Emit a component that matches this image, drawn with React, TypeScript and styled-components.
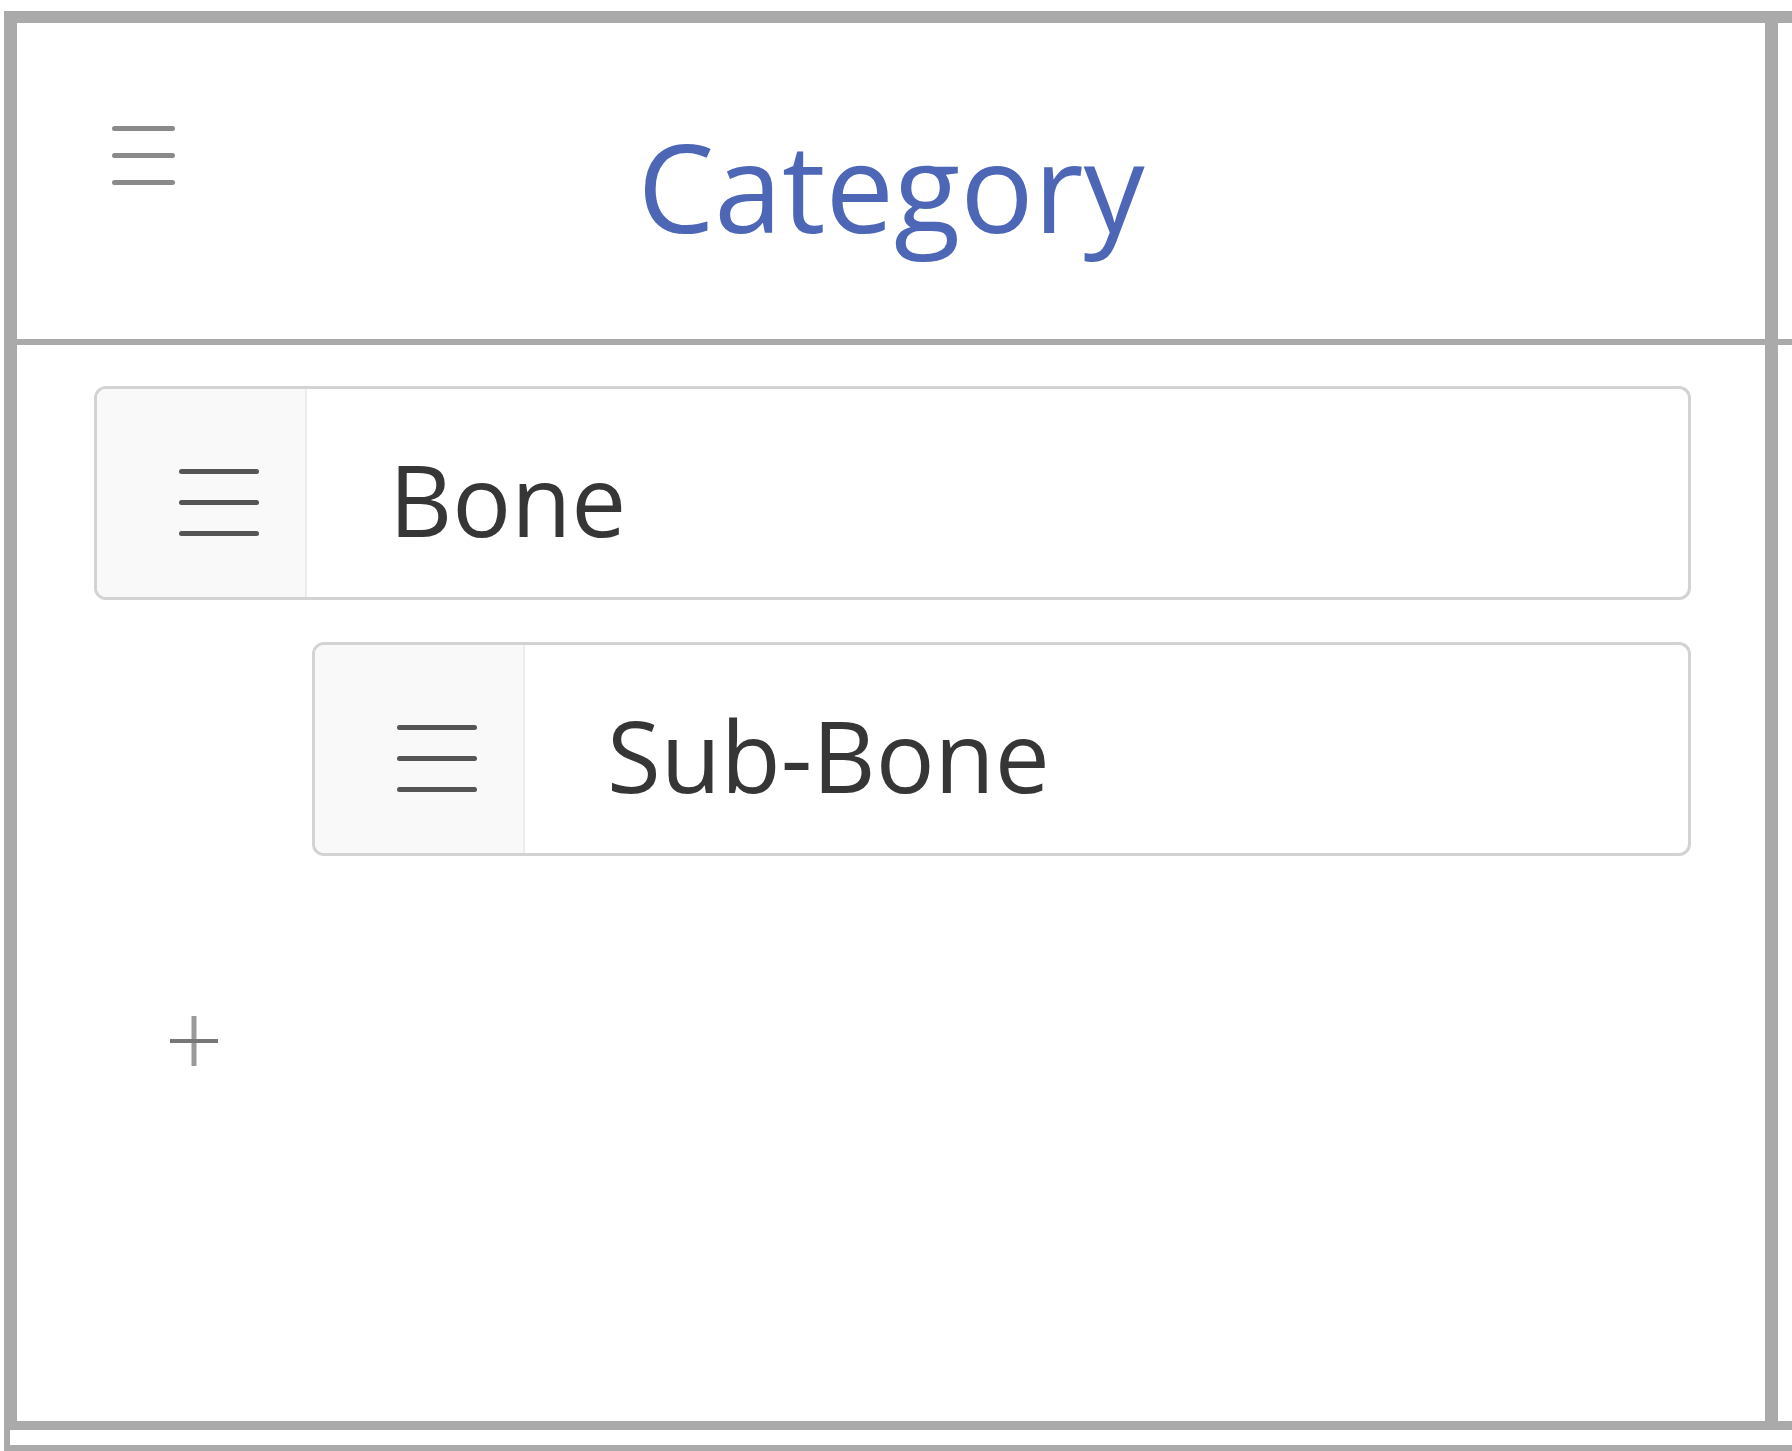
import React from "react";
import styled, { createGlobalStyle } from "styled-components";

const GlobalStyle = createGlobalStyle`
  html, body {
    margin: 0;
    padding: 0;
    background: #fff;
    overflow: hidden;
  }
  body {
    font-family: "Open Sans", "Liberation Sans", sans-serif;
  }
`;

const Page = styled.div`
  margin: 11px 0 0 4px;
  border-left: 6px solid #aaa;
`;

const Board = styled.div`
  display: grid;
  grid-template-columns: 1768px 600px;
  border-top: 12px solid #aaa;
`;

const Lane = styled.section<{ $first?: boolean }>`
  box-sizing: border-box;
  height: 1407px;
  display: flex;
  flex-direction: column;
  border-left: ${(p) => (p.$first ? "7px solid #aaa" : "none")};
  border-right: ${(p) => (p.$first ? "13px solid #aaa" : "none")};
  border-bottom: 9px solid #aaa;
`;

const LaneHeader = styled.header`
  height: 316px;
  flex-shrink: 0;
  display: grid;
  grid-template-columns: 1fr auto 1fr;
  border-bottom: 6px solid #aaa;
`;

const MenuButton = styled.button`
  align-self: start;
  justify-self: start;
  margin: 103px 0 0 95px;
  padding: 0;
  border: none;
  background: none;
  display: flex;
`;

const Title = styled.h1`
  align-self: center;
  margin: 10px 0 0;
  font-size: 122px;
  line-height: 1;
  font-weight: 400;
  color: #4d67b6;
`;

const LaneBody = styled.div`
  flex: 1;
  display: flex;
  flex-direction: column;
  padding: 41px 74px 0 77px;
`;

const List = styled.div`
  display: flex;
  flex-direction: column;
  gap: 42px;
`;

const Item = styled.div<{ $depth: number }>`
  box-sizing: border-box;
  height: 214px;
  margin-left: ${(p) => p.$depth * 218}px;
  display: flex;
  border: 3px solid #d3d3d3;
  border-radius: 12px;
  overflow: hidden;
  background: #fff;
`;

const Handle = styled.div`
  width: 210px;
  flex-shrink: 0;
  display: flex;
  align-items: center;
  justify-content: center;
  padding: 18px 0 0 36px;
  box-sizing: border-box;
  background: #f9f9f9;
  border-right: 2px solid #ececec;
`;

const Label = styled.div`
  flex: 1;
  display: flex;
  align-items: center;
  padding: 12px 0 0 82px;
  font-size: 98px;
  line-height: 1;
  color: #363636;
`;

const AddButton = styled.button`
  align-self: flex-start;
  margin: 158px 0 0 74px;
  padding: 0;
  border: none;
  background: none;
  display: flex;
`;

const NextRow = styled.div`
  height: 60px;
  margin-top: 15px;
  border-top: 6px solid #aaa;
`;

function Bars({ width, gap, stroke, color }: { width: number; gap: number; stroke: number; color: string }) {
  const h = gap * 2 + stroke;
  return (
    <svg width={width} height={h} viewBox={`0 0 ${width} ${h}`}>
      {[0, 1, 2].map((i) => (
        <line
          key={i}
          x1={stroke / 2}
          x2={width - stroke / 2}
          y1={stroke / 2 + i * gap}
          y2={stroke / 2 + i * gap}
          stroke={color}
          strokeWidth={stroke}
          strokeLinecap="round"
        />
      ))}
    </svg>
  );
}

const items = [
  { label: "Bone", depth: 0 },
  { label: "Sub-Bone", depth: 1 },
];

export default function App() {
  return (
    <>
      <GlobalStyle />
      <Page>
        <Board>
          <Lane $first>
            <LaneHeader>
              <MenuButton>
                <Bars width={63} gap={27} stroke={5} color="#8a8a8a" />
              </MenuButton>
              <Title>Category</Title>
              <div />
            </LaneHeader>
            <LaneBody>
              <List>
                {items.map((it) => (
                  <Item key={it.label} $depth={it.depth}>
                    <Handle>
                      <Bars width={80} gap={31} stroke={5} color="#555" />
                    </Handle>
                    <Label>{it.label}</Label>
                  </Item>
                ))}
              </List>
              <AddButton>
                <svg width={52} height={54} viewBox="0 0 52 54">
                  <line x1={26} y1={2} x2={26} y2={52} stroke="#9a9a9a" strokeWidth={5} />
                  <line x1={2} y1={27} x2={50} y2={27} stroke="#777" strokeWidth={4} />
                </svg>
              </AddButton>
            </LaneBody>
          </Lane>
          <Lane>
            <LaneHeader />
          </Lane>
        </Board>
        <NextRow />
      </Page>
    </>
  );
}
